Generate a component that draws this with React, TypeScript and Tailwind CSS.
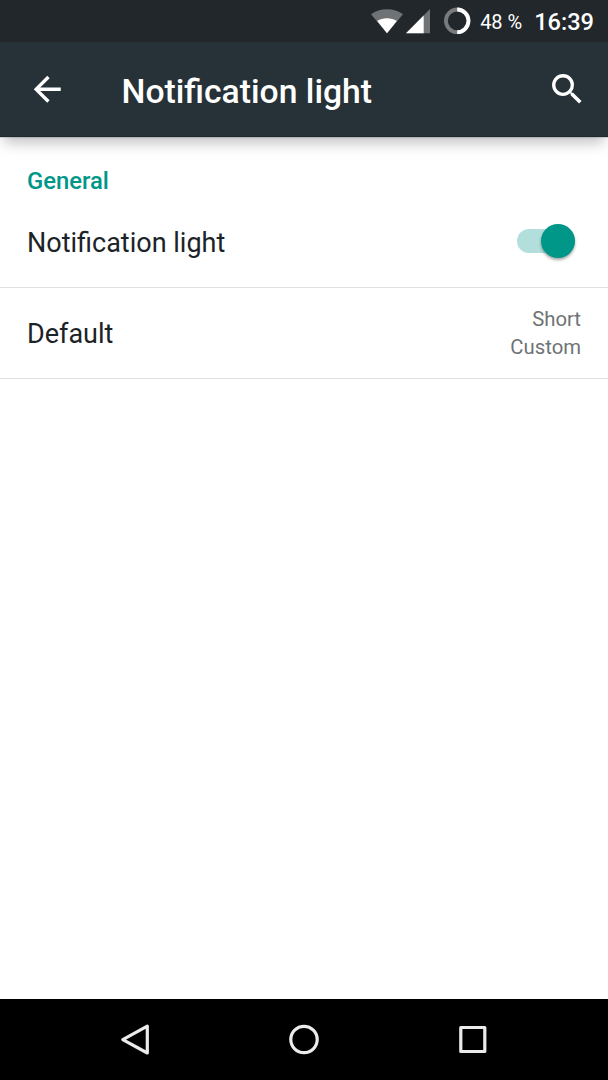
import { useState } from 'react';

function StatusBar() {
    return (
        <div className="h-[42px] shrink-0 bg-[#21272b] flex items-center justify-end pr-3.5 text-white">
            {/* Wifi */}
            <svg className="w-8 h-[42px] mr-[3px]" viewBox="0 0 32 42">
                <path d="M16 33.300 0 14.200C4.600 10.800 10 9.300 16 9.300s11.400 1.500 16 4.900z" fill="#6f7375" />
                <path d="M16 33.300 6.200 21.100C9 19.200 12.300 18.300 16 18.300s7 .9 9.800 2.800z" fill="#fff" />
            </svg>
            {/* Señal */}
            <svg className="w-6 h-[42px] mr-3.5" viewBox="0 0 24 42">
                <path d="M0 33.300 24 9.100v24.200z" fill="#6f7375" />
                <path d="M0 33.300 17.700 15.400v17.900z" fill="#fff" />
            </svg>
            {/* Batería */}
            <svg className="w-[27px] h-[42px] mr-[9px]" viewBox="0 0 27 42" fill="none" strokeWidth="3.800">
                <circle cx="13.200" cy="20.800" r="11.300" stroke="#777b7d" />
                <path d="M13.200 9.500a11.300 11.300 0 0 1 0 22.600" stroke="#fff" />
            </svg>
            <span className="text-[20px] leading-none w-[54px] pt-0.5 whitespace-nowrap">48 %</span>
            <span className="text-[23.600px] leading-none pt-[3px] font-medium whitespace-nowrap">16:39</span>
        </div>
    );
}

function NavBar() {
    return (
        <div className="h-[81px] shrink-0 bg-black flex items-center justify-between px-[120px]">
            <button aria-label="Back">
                <svg className="w-8 h-[34px]" viewBox="0 0 32 34" fill="none" stroke="#ebebeb" strokeWidth="3.200" strokeLinejoin="round">
                    <path d="M27.300 3.200v26.800L2.800 16.600z" />
                </svg>
            </button>
            <button aria-label="Home">
                <svg className="w-8 h-[34px]" viewBox="0 0 32 34" fill="none" stroke="#ebebeb" strokeWidth="3.200">
                    <circle cx="16" cy="16.500" r="13.200" />
                </svg>
            </button>
            <button aria-label="Recents">
                <svg className="w-8 h-[34px]" viewBox="0 0 32 34" fill="none" stroke="#ebebeb" strokeWidth="3.200" strokeLinejoin="round">
                    <rect x="4.800" y="4.500" width="24" height="24" />
                </svg>
            </button>
        </div>
    );
}

export default function App() {
    const [encendido, setEncendido] = useState(true);

    return (
        <div className="w-[608px] h-[1080px] flex flex-col bg-white overflow-hidden font-[Roboto,sans-serif]">
            <StatusBar />

            {/* Header */}
            <header className="h-[95px] shrink-0 bg-[#273238] border-b border-[#1f282c] flex items-center pl-[27px] pr-[21px] text-white shadow-[0_10px_13px_-4px_rgba(0,0,0,0.24),0_1px_1px_rgba(0,0,0,0.12)]">
                <button aria-label="Navigate up">
                    <svg className="w-[40.500px] h-[40.500px]" viewBox="0 0 24 24" fill="currentColor">
                        <path d="M20 11H7.830l5.590-5.590L12 4l-8 8 8 8 1.410-1.410L7.830 13H20v-2z" />
                    </svg>
                </button>
                <h1 className="ml-[54px] mt-[5px] flex-1 text-[33.700px] leading-10 font-medium whitespace-nowrap">Notification light</h1>
                <button aria-label="Search">
                    <svg className="w-[40.500px] h-[40.500px]" viewBox="0 0 24 24" fill="currentColor">
                        <path d="M15.500 14h-.79l-.28-.27A6.471 6.471 0 0 0 16 9.500 6.500 6.500 0 1 0 9.500 16c1.610 0 3.090-.59 4.230-1.570l.27.28v.79l5 4.990L20.490 19l-4.990-5zm-6 0C7.010 14 5 11.990 5 9.500S7.010 5 9.500 5 14 7.010 14 9.500 11.990 14 9.500 14z" />
                    </svg>
                </button>
            </header>

            {/* Opciones */}
            <main className="flex-1 pt-[28px]">
                <h2 className="px-[27px] h-8 leading-8 text-[23.800px] font-medium text-[#009688]">General</h2>
                <div className="h-[91px] px-[27px] flex items-center justify-between border-b border-[#e0e0e0]">
                    <span className="text-[27px] leading-8 pt-0.5 text-[#1c2327]">Notification light</span>
                    <button
                        role="switch"
                        aria-checked={encendido}
                        aria-label="Notification light"
                        onClick={() => setEncendido(!encendido)}
                        className={`w-[58px] h-6 mr-1.5 mb-[2px] rounded-full flex items-center ${encendido ? 'bg-[#b2dfdb] justify-end' : 'bg-gray-300 justify-start'}`}
                    >
                        <span className={`size-[34px] rounded-full shadow-[0_2px_3px_rgba(0,0,0,0.35)] ${encendido ? 'bg-[#009688]' : 'bg-gray-50'}`} />
                    </button>
                </div>
                <div className="h-[91px] px-[27px] flex items-center justify-between border-b border-[#e0e0e0]">
                    <span className="text-[27px] leading-8 pt-0.5 text-[#1c2327]">Default</span>
                    <div className="text-right text-[20.300px] leading-7 text-[#6e7375]">
                        <p>Short</p>
                        <p>Custom</p>
                    </div>
                </div>
            </main>

            <NavBar />
        </div>
    );
}
